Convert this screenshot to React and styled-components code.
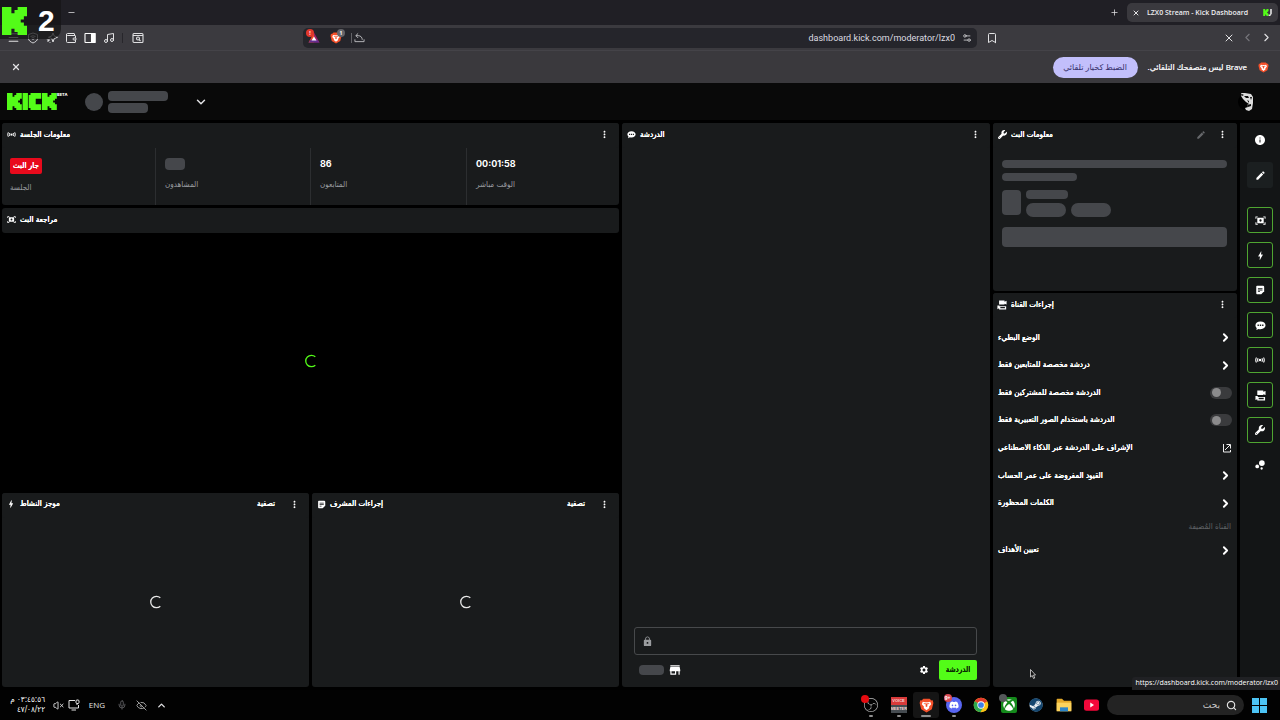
import React from "react";
import styled, { createGlobalStyle, css } from "styled-components";
import { MdMoreVert, MdEdit, MdInfo, MdBolt, MdSettings, MdLock, MdBubbleChart, MdStore } from "react-icons/md";
import { FaDiscord, FaSteam, FaXbox, FaWrench } from "react-icons/fa6";
import { SiObsstudio } from "react-icons/si";
import {
  Menu, Wallet, Music, Bookmark, X, ChevronLeft, ChevronRight, ChevronDown,
  ChevronUp, Plus, Minus, Search, Mic, EyeOff, VolumeX, Settings2,
} from "lucide-react";

const green = "#53fc18";
const panel = "#191b1c";
const bone = "#45474b";

const Global = createGlobalStyle`
  *, *::before, *::after { box-sizing: border-box; }
  body { margin: 0; background: #000; color: #fff;
    font-family: Inter, "DejaVu Sans Condensed", "DejaVu Sans", sans-serif; font-size: 8px; line-height: 12px; }
  button, input { font: inherit; color: inherit; background: none; border: 0; padding: 0; margin: 0; min-width: 0; outline: 0; }
  h2, p, ul { margin: 0; padding: 0; font-size: inherit; font-weight: inherit; list-style: none; }
  a { color: inherit; text-decoration: none; }
  svg { display: block; flex: none; }
`;

const Page = styled.div`
  position: relative;
  min-height: 100vh;
  display: flex;
  flex-direction: column;
`;

/* ---------- browser ---------- */
const chromeFont = css`font-family: "Open Sans", "DejaVu Sans", sans-serif;`;
const strong = css`
  font-family: "DejaVu Sans Condensed", "DejaVu Sans", sans-serif;
  font-weight: 400;
  text-shadow: 0 0 0 currentColor, 0 0 0 currentColor;
`;

const TabStrip = styled.div`
  ${chromeFont}
  height: 25px;
  background: #201f25;
  display: flex;
  align-items: center;
  padding: 0 2px 0 66px;
`;
const IconButton = styled.button`
  display: flex;
  align-items: center;
  justify-content: center;
  width: ${(p) => p.$w || 19}px;
  height: 18px;
  color: ${(p) => p.$color || "#e2e2e4"};
  margin-left: ${(p) => (p.$push ? "auto" : "0")};
  flex: none;
`;
const Tab = styled.div`
  display: flex;
  align-items: center;
  gap: 4px;
  height: 19px;
  padding: 0 6px 0 2px;
  border-radius: 5px;
  background: #3a393e;
  margin-left: 4px;
  width: 151px;
  white-space: nowrap;
  span { flex: 1; font-weight: 600; font-size: 7px; color: #ededf0; }
`;
const Toolbar = styled.div`
  ${chromeFont}
  height: 26px;
  background: #3b3a3f;
  border-bottom: 1px solid #444348;
  display: grid;
  grid-template-columns: 303fr 674fr 303fr;
  align-items: center;
`;
const ToolGroup = styled.div`
  display: flex;
  align-items: center;
  padding: 0 4px;
`;
const Divider = styled.i`
  width: 1px;
  height: 10px;
  background: ${(p) => p.$color || "#27262b"};
  margin: 0 ${(p) => p.$m || 0}px;
`;
const Address = styled.label`
  display: flex;
  align-items: center;
  height: 20px;
  border-radius: 5px;
  background: #25252b;
  padding: 0 4px;
  input { flex: 1; text-align: right; font-family: Roboto, sans-serif; font-size: 9px; color: #dcdce0; padding: 0 6px; }
`;
const InfoBar = styled.div`
  ${chromeFont}
  height: 32px;
  background: #3a393d;
  display: flex;
  align-items: center;
  padding: 0 11px 0 6px;
  p { margin: 0 11px 0 10px; color: #ececee; text-shadow: 0 0 0 currentColor; }
`;
const DefaultButton = styled.button`
  margin-left: auto;
  height: 21px;
  width: 85px;
  border-radius: 11px;
  background: #c2bffb;
  color: #35306b;
  white-space: nowrap;
`;

/* ---------- dashboard ---------- */
const Header = styled.header`
  height: 37px;
  background: #090909;
  display: flex;
  align-items: center;
  padding: 0 24px 0 7px;
`;
const Beta = styled.sup`
  font-size: 4px;
  line-height: 6px;
  font-weight: 800;
  align-self: flex-start;
  width: 12px;
  margin-top: 9px;
`;
const Stack = styled.div`
  display: flex;
  flex-direction: column;
  gap: ${(p) => p.$gap || 2}px;
`;
const Bone = styled.span`
  display: block;
  width: ${(p) => p.$w || "100%"};
  height: ${(p) => p.$h}px;
  border-radius: ${(p) => p.$r || 4}px;
  background: ${bone};
  flex: none;
`;
const Board = styled.main`
  flex: 1;
  display: grid;
  grid-template-columns: minmax(0, 617fr) minmax(0, 368fr) minmax(0, 244fr) 40px;
  column-gap: 3px;
  padding: 3px 0 3px 2px;
`;
const LeftColumn = styled.div`
  display: grid;
  grid-template-rows: 82px minmax(0, 29fr) minmax(0, 20fr);
  gap: 3px;
`;
const Split = styled.div`
  display: grid;
  grid-template-columns: 1fr 1fr;
  gap: 3px;
`;
const RightColumn = styled.div`
  display: grid;
  grid-template-rows: 168px 1fr;
  gap: 2px;
`;
const Panel = styled.section`
  background: ${(p) => (p.$video ? "#000" : panel)};
  border-radius: 3px;
  display: flex;
  flex-direction: column;
  min-width: 0;
`;
const PanelHead = styled.div`
  display: flex;
  align-items: center;
  gap: 3px;
  height: 25px;
  padding: 0 6px 2px 3px;
  background: ${panel};
  border-radius: 3px;
  h2 { ${strong} flex: 1; white-space: nowrap; }
`;
const HeadIcon = styled.span`
  width: 12px;
  display: flex;
  justify-content: center;
`;
const Filter = styled.button`
  ${strong}
  margin-right: 7px;
`;
const Stats = styled.div`
  flex: 1;
  display: grid;
  grid-template-columns: 153fr 155fr 156fr 153fr;
`;
const Stat = styled.div`
  display: flex;
  flex-direction: column;
  align-items: flex-start;
  gap: 8px;
  padding: 10px 0 0 9px;
  border-left: 1px solid #2c2e30;
  &:first-child { border-left: 0; padding-left: 8px; gap: 7px; }
  strong { font-size: 9px; font-weight: 700; }
  p { color: #9b9ea2; }
`;
const Live = styled.span`
  ${strong}
  height: 16px;
  line-height: 16px;
  padding: 0 3px;
  border-radius: 2px;
  background: #e80a1c;
`;
const Center = styled.div`
  flex: 1;
  display: flex;
  align-items: center;
  justify-content: center;
`;
const Skeletons = styled.div`
  display: flex;
  flex-direction: column;
  padding: 12px 10px 12px 9px;
  gap: 9px;
  > :last-child { margin-top: 1px; }
`;
const Line = styled.div`
  display: flex;
  gap: 5px;
`;
const Identity = styled(Line)`
  align-items: center;
  margin: 0 23px 0 16px;
`;
const Composer = styled.div`
  margin-top: auto;
  padding: 0 13px 7px 12px;
`;
const ChatField = styled.label`
  display: flex;
  align-items: center;
  height: 28px;
  border: 1px solid #47494b;
  border-radius: 3px;
  padding: 0 7px;
  color: #9a9c9f;
  input { flex: 1; }
`;
const ComposerRow = styled.div`
  display: flex;
  align-items: center;
  gap: 4px;
  padding: 5px 0 0 5px;
`;
const Send = styled.button`
  ${strong}
  width: 38px;
  height: 20px;
  border-radius: 2px;
  background: ${green};
  color: #0b2a03;
  margin-left: 2px;
`;
const Actions = styled.ul`
  margin-top: 6px;
  display: grid;
  grid-auto-rows: 1fr;
  min-height: ${(p) => p.$h}px;
`;
const Action = styled.li`
  ${strong}
  display: flex;
  align-items: center;
  padding: 0 5px;
  > * { flex: 1; display: flex; align-items: center; justify-content: space-between; text-shadow: inherit; }
`;
const HostLabel = styled.p`
  text-align: right;
  padding: 3px 6px 0 0;
  color: #5f6265;
`;
const Toggle = styled.input.attrs({ type: "checkbox" })`
  appearance: none;
  width: 22px;
  height: 12px;
  border-radius: 6px;
  background: #3a3b3d;
  display: flex;
  align-items: center;
  padding: 0 2px;
  &::before { content: ""; width: 9px; height: 9px; border-radius: 50%; background: #8b8b8c; }
  &:checked { background: ${green}; justify-content: flex-end; }
`;
const Rail = styled.nav`
  background: #131516;
  display: flex;
  flex-direction: column;
  align-items: center;
  gap: 9px;
  padding-top: 4px;
`;
const RailButton = styled.button`
  width: 26px;
  height: 26px;
  display: flex;
  align-items: center;
  justify-content: center;
  border-radius: 3px;
  border: 1px solid ${(p) => (p.$on ? "#4fa531" : "transparent")};
  background: ${(p) => (p.$soft ? "#1b1f20" : "transparent")};
  margin-bottom: ${(p) => (p.$soft ? 10 : 0)}px;
`;

/* ---------- taskbar ---------- */
const Taskbar = styled.footer`
  ${chromeFont}
  height: 30px;
  background: #020202;
  display: flex;
  align-items: center;
  padding: 0 12px;
`;
const Clock = styled.time`
  width: 33px;
  direction: rtl;
  text-align: right;
  font-family: "DejaVu Sans Condensed", "DejaVu Sans", sans-serif;
  line-height: 10px;
  white-space: nowrap;
`;
const Apps = styled.div`
  margin-left: auto;
  width: 246px;
  display: flex;
  justify-content: space-between;
`;
const TaskButton = styled.button`
  position: relative;
  width: 26px;
  height: 26px;
  border-radius: 3px;
  display: flex;
  align-items: center;
  justify-content: center;
  background: ${(p) => (p.$active ? "#151515" : "transparent")};
  &::after {
    content: "";
    display: ${(p) => (p.$run || p.$active ? "block" : "none")};
    position: absolute;
    bottom: 1px;
    width: ${(p) => (p.$active ? 10 : 4)}px;
    height: 2px;
    border-radius: 1px;
    background: #8f8f8f;
  }
`;
const Badge = styled.b`
  position: absolute;
  left: ${(p) => p.$x}px;
  top: ${(p) => p.$y}px;
  width: 8px;
  height: 8px;
  border-radius: 50%;
  background: ${(p) => p.$bg};
  color: #fff;
  font-size: 5px;
  line-height: 8px;
  text-align: center;
`;
const Voice = styled.span`
  width: 16px;
  overflow: hidden;
  text-align: center;
  font: 700 4px/8px "Liberation Sans", sans-serif;
  background: linear-gradient(#d93a3a 50%, #454b50 50%);
  color: #f4d6d6;
  span { display: block; }
`;
const SearchBox = styled.label`
  display: flex;
  align-items: center;
  width: 137px;
  height: 20px;
  margin: 0 7px 0 3px;
  padding: 0 7px;
  gap: 6px;
  border-radius: 10px;
  background: #232323;
  input { flex: 1; direction: rtl; font-size: 9px; }
  input::placeholder { color: #c8c8c8; opacity: 1; }
`;
const LinkBubble = styled.div`
  ${chromeFont}
  position: absolute;
  right: 0;
  bottom: 30px;
  padding: 0 2px 0 4px;
  height: 13px;
  border-top-left-radius: 3px;
  background: #202124;
  font-size: 7px;
`;
const Pointer = styled.svg`
  position: absolute;
  right: 244px;
  bottom: 41px;
`;
const Overlay = styled.div`
  position: absolute;
  left: 0;
  top: 0;
  width: 61px;
  height: 39px;
  border-radius: 0 0 10px 0;
  background: rgba(22, 22, 23, 0.75);
  display: flex;
  align-items: center;
  gap: 11px;
  padding: 2px 0 0 2px;
  font: 700 30px/28px "Liberation Sans", sans-serif;
`;
const AddressIcon = styled.span`
  position: relative;
  width: ${(p) => p.$w}px;
  display: flex;
  justify-content: center;
`;

/* ---------- drawings ---------- */
const K = "M0 0h3v2h1V1h1V0h3v3H7v1H6v1h1v1h1v3H5V8H4V7H3v2H0Z";
const KickMark = ({ w, h }) => (
  <svg width={w} height={h} viewBox="0 0 8 9" preserveAspectRatio="none" fill={green}><path d={K} /></svg>
);
const Favicon = () => (
  <svg width="9" height="7" viewBox="0 0 11 9"><path d={K} fill={green} transform="scale(.85 1)" /><path d="M9 0h2v6L9 9H7V7h2Z" fill="#e8e8e8" /></svg>
);
const KickLogo = () => (
  <svg width="50" height="17" viewBox="0 0 27 9" preserveAspectRatio="none" fill={green} role="img" aria-label="Kick">
    <path d={K} />
    <rect x="8.4" width="2.9" height="9" />
    <path d="M12.700 0h5.800v3h-3v3h3v3h-5.800V8h-1V1h1Z" />
    <path d={K} transform="translate(18.9)" />
  </svg>
);
const Spinner = ({ color = "#e8e8e8" }) => (
  <svg width="14" height="14" viewBox="0 0 14 14" fill="none" stroke={color} strokeWidth="1.3">
    <path d="M11.300 2.800A5.700 5.700 0 1 0 11.300 11.200" />
  </svg>
);
const Broadcast = ({ s = 10 }) => (
  <svg width={s} height={s} viewBox="0 0 24 24" fill="none" stroke="#fff" strokeWidth="2.600">
    <circle cx="12" cy="12" r="3" fill="#fff" stroke="none" />
    <path d="M7.500 8q-2.500 4 0 8M16.500 8q2.500 4 0 8M3.500 6q-3.500 6 0 12M20.500 6q3.500 6 0 12" />
  </svg>
);
const Preview = ({ s = 11 }) => (
  <svg width={s} height={s} viewBox="0 0 24 24" fill="#fff">
    <path fillRule="evenodd" d="M5 6h14v12H5Zm7 3.500a2.500 2.500 0 1 0 0 5 2.500 2.500 0 0 0 0-5Z" />
    <path d="M1 3h5v2H3v3H1ZM18 3h5v5h-2V5h-3ZM1 16h2v3h3v2H1ZM21 16h2v5h-5v-2h3Z" />
  </svg>
);
const Cameras = ({ s = 11 }) => (
  <svg width={s} height={s} viewBox="0 0 24 24" fill="#fff">
    <path d="M5 1h13v3l5-2v9l-5-2v2H5Z" />
    <path fillRule="evenodd" d="M1 13h5v2h16v8H5v-3l-4 2Zm7 4v3h11v-3Z" />
  </svg>
);
const Bubble = ({ s = 11 }) => (
  <svg width={s} height={s} viewBox="0 0 24 24">
    <path d="M12 3c6.500 0 11 3.600 11 8.500S18.500 20 12 20c-1.500 0-3-.2-4.200-.6L3 22l.8-4.500C2 16 1 14 1 11.500 1 6.600 5.500 3 12 3Z" fill="#fff" />
    <path d="M5.500 10h3v3h-3ZM10.500 10h3v3h-3ZM15.500 10h3v3h-3Z" fill={panel} />
  </svg>
);
const Note = ({ s = 11 }) => (
  <svg width={s} height={s} viewBox="0 0 24 24">
    <path d="M5 2h14q3 0 3 3v10l-7 7H5q-2 0-2-3V4q0-2 2-2Z" fill="#fff" />
    <path d="M7 7h11v2H7ZM7 11h11v2H7ZM7 15h5v2H7Z" fill={panel} />
  </svg>
);
const External = () => (
  <svg width="10" height="10" viewBox="0 0 20 20" fill="none" stroke="#eee" strokeWidth="2">
    <path d="M3 2v16h14v-4M6 14 16 4M9 3h8v8" />
  </svg>
);
const Shield = () => (
  <svg width="12" height="12" viewBox="0 0 24 24" fill="none" stroke="#cfcfd2" strokeWidth="2">
    <path d="M12 2 21 5v8c0 4-4 7-9 9-5-2-9-5-9-9V5Z" /><path d="M7 9q5-3 10 0M9 12q3-2 6 0M12 14v2" />
  </svg>
);
const LeoStar = () => (
  <svg width="12" height="12" viewBox="0 0 24 24" fill="none" stroke="#dedee0" strokeWidth="2">
    <path d="m14 2 2.500 6L23 10.500 16.500 13 14 20l-2.500-7L5 10.500 11.500 8Z" /><path d="m7 15-4 4M3 14v1M8 20v1" strokeWidth="3" />
  </svg>
);
const SidePanel = () => (
  <svg width="12" height="12" viewBox="0 0 24 24" fill="none" stroke="#fff" strokeWidth="2.200">
    <rect x="2" y="3" width="20" height="18" rx="1" /><path d="M15 3h7v18h-7Z" fill="#fff" />
  </svg>
);
const SearchWindow = () => (
  <svg width="12" height="12" viewBox="0 0 24 24" fill="none" stroke="#dedee0" strokeWidth="2.200">
    <rect x="2" y="3" width="20" height="18" rx="2" /><path d="M2 7h20M14 15l3 3" /><circle cx="12" cy="13" r="3" />
  </svg>
);
const Triangle = () => (
  <svg width="12" height="11" viewBox="0 0 24 22">
    <path d="M12 1 1 21h11Z" fill="#f04b28" /><path d="m12 1 11 20H12Z" fill="#9e1f63" />
    <path d="M1 21h22l-5-6H6Z" fill="#662d91" /><path d="m12 9 5 8H7Z" fill="#fff" />
  </svg>
);
const Lion = ({ s = 12 }) => (
  <svg width={s} height={s} viewBox="0 0 24 24">
    <path d="M7 1h10l3 3 2-.3L23 8l-2.500 10L12 23 3.500 18 1 8l1-4.300L4 4Z" fill="#f4502a" />
    <path d="m6 6 4 .6h4L18 6l1.500 4-3.500 4 .5 2-4.500 3.500L7.500 16l.5-2-3.500-4Z" fill="#fff" />
    <path d="m7 9 4 1.200-.6 3L12 14.500l1.600-1.300-.6-3L17 9l-2-.8-3 .6-3-.6Z" fill="#f4502a" />
  </svg>
);
const ShareBack = () => (
  <svg width="11" height="11" viewBox="0 0 24 24" fill="none" stroke="#bdbdc1" strokeWidth="2">
    <path d="M9 3 4 8l5 5M4 8h5c6 0 9 4 9 9M2 16v5h20v-5" />
  </svg>
);
const Face = () => (
  <svg width="18" height="20" viewBox="0 0 18 20">
    <circle cx="8" cy="10" r="8" fill="#000" />
    <path d="M3 1l4 0 6 1 2 3 0 6-1 6-3 2-3-1-1-2 3-1-1-2 2-1-3-2-3-3-2-3 1-1Z" fill="#dcdcdc" />
    <path d="M6 4l4 0 1 2-3 0ZM12 5l2 0-1 3ZM9 8l2 1 0 2ZM9 13l4-1 0 2-3 1ZM4 2l2 1-2 1Z" fill="#0c0c0c" />
  </svg>
);
const Chrome = () => (
  <svg width="16" height="16" viewBox="0 0 24 24">
    <circle cx="12" cy="12" r="11" fill="#fbc116" />
    <path d="M12 12 2.500 6.500a11 11 0 0 1 19 0Z" fill="#e33b2e" />
    <path d="M2.500 6.500a11 11 0 0 0 8.500 16.500l5-8.500L12 12Z" fill="#2da94f" />
    <circle cx="12" cy="12" r="5.500" fill="#fff" /><circle cx="12" cy="12" r="4.300" fill="#3f7fe8" />
  </svg>
);
const Folder = () => (
  <svg width="16" height="14" viewBox="0 0 24 21">
    <path d="M1 2q0-1 1-1h7l3 3h10q1 0 1 1v14H1Z" fill="#e3a92b" /><path d="M1 7h22v13H1Z" fill="#fbd35e" />
    <path d="M6 14h12v6H6Z" fill="#2d86c9" />
  </svg>
);
const Youtube = () => (
  <svg width="15" height="12" viewBox="0 0 24 18">
    <rect width="24" height="18" rx="4" fill="#f3083a" /><path d="m10 5 6 4-6 4Z" fill="#fff" />
  </svg>
);
const Windows = () => (
  <svg width="15" height="15" viewBox="0 0 15 15" fill="#4cc3f4"><path d="M0 0h7v7H0ZM8 0h7v7H8ZM0 8h7v7H0ZM8 8h7v7H8Z" /></svg>
);
const Monitor = () => (
  <svg width="12" height="12" viewBox="0 0 24 24" fill="none" stroke="#e4e4e4" strokeWidth="2">
    <path d="M14 3H2v15h19v-6M7 22h9M18 12v-3" /><rect x="16" y="2" width="6" height="7" rx="2" />
  </svg>
);

/* ---------- composed pieces ---------- */
const Head = ({ icon, title, filter, edit }) => (
  <PanelHead>
    <HeadIcon>{icon}</HeadIcon>
    <h2>{title}</h2>
    {filter && <Filter>تصفية</Filter>}
    {edit && <IconButton $w={18} $color="#65676a" aria-label="تعديل"><MdEdit size={10} /></IconButton>}
    <IconButton $w={18} $color="#fff" aria-label="المزيد"><MdMoreVert size={11} /></IconButton>
  </PanelHead>
);

const Row = ({ text, kind = "more" }) => (
  <Action>
    {kind === "toggle" && <label>{text}<Toggle /></label>}
    {kind === "link" && <a href="#ai">{text}<External /></a>}
    {kind === "more" && <button>{text}<ChevronRight size={13} strokeWidth={3.5} /></button>}
  </Action>
);

const rows = [
  ["الوضع البطيء"],
  ["دردشة مخصصة للمتابعين فقط"],
  ["الدردشة مخصصة للمشتركين فقط", "toggle"],
  ["الدردشة باستخدام الصور التعبيرية فقط", "toggle"],
  ["الإشراف على الدردشة عبر الذكاء الاصطناعي", "link"],
  ["القيود المفروضة على عمر الحساب"],
  ["الكلمات المحظورة"],
];

const rail = [
  ["مراجعة البث", <Preview />],
  ["موجز النشاط", <MdBolt size={11} />],
  ["إجراءات المشرف", <Note s={10} />],
  ["الدردشة", <Bubble />],
  ["معلومات الجلسة", <Broadcast />],
  ["إجراءات القناة", <Cameras />],
  ["معلومات البث", <FaWrench size={10} />],
];

export default function App() {
  return (
    <Page>
      <Global />
      <TabStrip>
        <IconButton $w={10} aria-label="Minimize"><Minus size={9} /></IconButton>
        <IconButton $w={18} $push aria-label="New tab"><Plus size={9} /></IconButton>
        <Tab>
          <IconButton $w={14} aria-label="Close tab"><X size={8} strokeWidth={3} /></IconButton>
          <span>LZX0 Stream - Kick Dashboard</span>
          <Favicon />
        </Tab>
      </TabStrip>
      <Toolbar>
        <ToolGroup>
          <IconButton aria-label="Menu"><Menu size={13} /></IconButton>
          <IconButton aria-label="VPN"><Shield /></IconButton>
          <IconButton aria-label="Leo"><LeoStar /></IconButton>
          <IconButton aria-label="Wallet"><Wallet size={12} /></IconButton>
          <IconButton aria-label="Sidebar"><SidePanel /></IconButton>
          <IconButton aria-label="Playlist"><Music size={12} /></IconButton>
          <Divider $m={4} />
          <IconButton $w={21} aria-label="Search tabs"><SearchWindow /></IconButton>
        </ToolGroup>
        <Address>
          <AddressIcon $w={14}><Triangle /><Badge $x={-1} $y={-3} $bg="#e0372c">!</Badge></AddressIcon>
          <AddressIcon $w={30}><Lion s={12} /><Badge $x={16} $y={-3} $bg="#65656a">1</Badge></AddressIcon>
          <Divider $color="#626267" />
          <AddressIcon $w={14}><ShareBack /></AddressIcon>
          <input aria-label="Address" defaultValue="dashboard.kick.com/moderator/lzx0" />
          <AddressIcon $w={12}><Settings2 size={10} color="#d0d0d3" /></AddressIcon>
        </Address>
        <ToolGroup>
          <IconButton $w={22} aria-label="Bookmark"><Bookmark size={12} /></IconButton>
          <IconButton $push aria-label="Stop"><X size={12} /></IconButton>
          <IconButton $color="#77767b" aria-label="Back"><ChevronLeft size={13} /></IconButton>
          <IconButton aria-label="Forward"><ChevronRight size={13} /></IconButton>
        </ToolGroup>
      </Toolbar>
      <InfoBar>
        <IconButton aria-label="Close"><X size={10} strokeWidth={3} /></IconButton>
        <DefaultButton>الضبط كخيار تلقائي</DefaultButton>
        <p dir="rtl">Brave ليس متصفحك التلقائي.</p>
        <Lion s={11} />
      </InfoBar>

      <Header>
        <KickLogo />
        <Beta>BETA</Beta>
        <Identity>
          <Bone $w="18px" $h={18} $r={9} />
          <Stack><Bone $w="60px" $h={10} /><Bone $w="40px" $h={10} /></Stack>
        </Identity>
        <IconButton aria-label="القناة"><ChevronDown size={14} strokeWidth={2.5} /></IconButton>
        <IconButton $w={18} $push aria-label="الحساب"><Face /></IconButton>
      </Header>

      <Board>
        <LeftColumn>
          <Panel>
            <Head icon={<Broadcast s={9} />} title="معلومات الجلسة" />
            <Stats>
              <Stat><Live>جار البث</Live><p>الجلسة</p></Stat>
              <Stat><Bone $w="20px" $h={12} /><p>المشاهدون</p></Stat>
              <Stat><strong>86</strong><p>المتابعون</p></Stat>
              <Stat><strong>00:01:58</strong><p>الوقت مباشر</p></Stat>
            </Stats>
          </Panel>
          <Panel $video>
            <PanelHead><HeadIcon><Preview s={9} /></HeadIcon><h2>مراجعة البث</h2></PanelHead>
            <Center><Spinner color={green} /></Center>
          </Panel>
          <Split>
            <Panel>
              <Head icon={<MdBolt size={10} />} title="موجز النشاط" filter />
              <Center><Spinner /></Center>
            </Panel>
            <Panel>
              <Head icon={<Note s={9} />} title="إجراءات المشرف" filter />
              <Center><Spinner /></Center>
            </Panel>
          </Split>
        </LeftColumn>

        <Panel>
          <Head icon={<Bubble s={9} />} title="الدردشة" />
          <Composer>
            <ChatField><MdLock size={11} /><input aria-label="الدردشة" /></ChatField>
            <ComposerRow>
              <Bone $w="25px" $h={10} />
              <IconButton $w={13} $color="#fff" aria-label="المتجر"><MdStore size={14} /></IconButton>
              <IconButton $w={18} $push $color="#fff" aria-label="الإعدادات"><MdSettings size={10} /></IconButton>
              <Send>الدردشة</Send>
            </ComposerRow>
          </Composer>
        </Panel>

        <RightColumn>
          <Panel>
            <Head icon={<FaWrench size={9} />} title="معلومات البث" edit />
            <Skeletons>
              <Stack $gap={5}><Bone $h={8} /><Bone $w="75px" $h={8} /></Stack>
              <Line>
                <Bone $w="19px" $h={25} />
                <Stack $gap={4}>
                  <Bone $w="42px" $h={9} />
                  <Line><Bone $w="40px" $h={14} $r={7} /><Bone $w="40px" $h={14} $r={7} /></Line>
                </Stack>
              </Line>
              <Bone $h={20} />
            </Skeletons>
          </Panel>
          <Panel>
            <Head icon={<Cameras s={10} />} title="إجراءات القناة" />
            <Actions $h={193}>
              {rows.map(([text, kind]) => <Row key={text} text={text} kind={kind} />)}
            </Actions>
            <HostLabel>القناة المُضيفة</HostLabel>
            <Actions $h={24}><Row text="تعيين الأهداف" /></Actions>
          </Panel>
        </RightColumn>

        <Rail>
          <RailButton aria-label="معلومات"><MdInfo size={12} /></RailButton>
          <RailButton $soft aria-label="تعديل"><MdEdit size={11} /></RailButton>
          {rail.map(([name, icon]) => <RailButton key={name} $on aria-label={name}>{icon}</RailButton>)}
          <RailButton aria-label="المزيد"><MdBubbleChart size={14} /></RailButton>
        </Rail>
      </Board>

      <Taskbar>
        <Clock>٠٣:٤٥:٥٦ م<br />٤٧/٠٨/٢٢</Clock>
        <IconButton $w={26} aria-label="Volume"><VolumeX size={11} /></IconButton>
        <IconButton $w={6} aria-label="Display"><Monitor /></IconButton>
        <IconButton $w={40} aria-label="Language">ENG</IconButton>
        <IconButton $w={10} $color="#66666a" aria-label="Microphone"><Mic size={10} /></IconButton>
        <IconButton $w={28} $color="#aaa" aria-label="Hidden"><EyeOff size={11} /></IconButton>
        <IconButton $w={12} aria-label="Show icons"><ChevronUp size={11} strokeWidth={3} /></IconButton>
        <Apps>
          <TaskButton $run aria-label="OBS"><SiObsstudio size={14} color="#bdbdbd" /><Badge $x={3} $y={3} $bg="#e50b10" /></TaskButton>
          <TaskButton $run aria-label="Voicemeeter"><Voice><span>VOICE</span><span>MEETER</span></Voice></TaskButton>
          <TaskButton $active aria-label="Brave"><Lion s={15} /></TaskButton>
          <TaskButton $run aria-label="Discord">
            <svg width="16" height="16" viewBox="0 0 16 16"><circle cx="8" cy="8" r="8" fill="#5865f2" /><FaDiscord x="3" y="3" size={10} color="#fff" /></svg>
            <Badge $x={3} $y={2} $bg="#d94b55">9+</Badge>
          </TaskButton>
          <TaskButton aria-label="Chrome"><Chrome /></TaskButton>
          <TaskButton aria-label="Xbox">
            <svg width="16" height="16" viewBox="0 0 16 16"><rect width="16" height="16" rx="2" fill="#148a1b" /><FaXbox x="2" y="2" size={12} color="#fff" /></svg>
            <Badge $x={3} $y={2} $bg="#55585a" />
          </TaskButton>
          <TaskButton aria-label="Steam">
            <svg width="14" height="14" viewBox="0 0 14 14"><circle cx="7" cy="7" r="6.500" fill="#e9eef2" /><FaSteam x="0" y="0" size={14} color="#14466f" /></svg>
          </TaskButton>
          <TaskButton aria-label="Files"><Folder /></TaskButton>
          <TaskButton aria-label="YouTube"><Youtube /></TaskButton>
        </Apps>
        <SearchBox><input aria-label="بحث" placeholder="بحث" /><Search size={11} color="#e2e2e2" strokeWidth={2.5} /></SearchBox>
        <IconButton $w={17} aria-label="Start"><Windows /></IconButton>
      </Taskbar>

      <LinkBubble>https://dashboard.kick.com/moderator/lzx0</LinkBubble>
      <Pointer width="6" height="10" viewBox="0 0 12 20"><path d="M1 1v15l3.500-3 2.500 6 2.500-1-2.500-6h4Z" fill="#111" stroke="#ddd" strokeWidth="1.600" /></Pointer>
      <Overlay><KickMark w={25} h={28} />2</Overlay>
    </Page>
  );
}
